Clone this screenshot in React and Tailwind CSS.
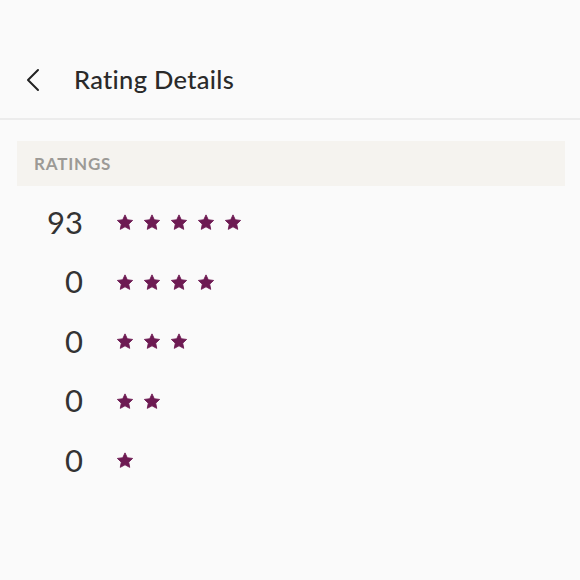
import React from "react";

const rows = [
  { count: 93, stars: 5 },
  { count: 0, stars: 4 },
  { count: 0, stars: 3 },
  { count: 0, stars: 2 },
  { count: 0, stars: 1 },
];

const Star = () => (
  <svg width="18" height="17" viewBox="0 0 24 23" className="shrink-0">
    <path
      d="M12 1.2l3.1 6.6 7.2.9-5.3 5 1.4 7.1L12 17.3l-6.4 3.5L7 13.7l-5.3-5 7.2-.9z"
      fill="#6d1a52"
      stroke="#6d1a52"
      strokeWidth="1.2"
      strokeLinejoin="round"
    />
  </svg>
);

export default function App() {
  return (
    <div
      className="w-[580px] h-[580px] bg-[#fafafa] overflow-hidden"
      style={{ fontFamily: "Lato, 'Noto Sans', sans-serif" }}
    >
      {/* Header */}
      <div className="h-[120px] flex items-end pb-[23px] border-b-2 border-[#ececec]">
        <div className="flex items-center">
          <svg width="60" height="30" viewBox="0 0 60 30" className="shrink-0">
            <path d="M38 5L28 15l10 10" fill="none" stroke="#222" strokeWidth="2" strokeLinecap="round" strokeLinejoin="round" />
          </svg>
          <h1 className="ml-[14px] text-[25.5px] font-medium text-[#2a2a2a] leading-none tracking-[0.3px]">
            Rating Details
          </h1>
        </div>
      </div>

      {/* Section header */}
      <div className="mt-[21px] mx-[17px] w-[548px] h-[45px] bg-[#f5f3ef] flex items-center px-[17px]">
        <span className="text-[17px] font-bold text-[#9c9a96] tracking-[0.8px]">RATINGS</span>
      </div>

      {/* Rows */}
      <div className="flex flex-col pt-[7px]">
        {rows.map((r, i) => (
          <div key={i} className="h-[59.5px] flex items-center">
            <span className="w-[83px] pb-[1px] text-right text-[31px] font-normal text-[#333] leading-none">{r.count}</span>
            <div className="ml-[33px] flex items-center gap-[9px]">
              {Array.from({ length: r.stars }).map((_, j) => (
                <Star key={j} />
              ))}
            </div>
          </div>
        ))}
      </div>
    </div>
  );
}
